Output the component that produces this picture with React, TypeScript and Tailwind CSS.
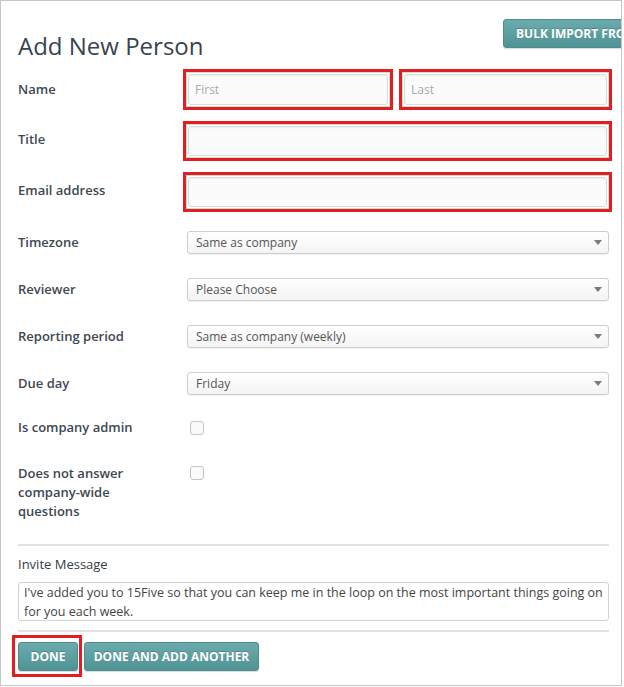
import React from 'react';

const font = { fontFamily: '"Open Sans", "Noto Sans", Arial, sans-serif' };

const Label: React.FC<{ children: React.ReactNode }> = ({ children }) => (
  <div className="w-[165px] shrink-0 text-[13px] font-semibold leading-[19px] text-[#3d4852]">{children}</div>
);

const RedBox: React.FC<{ className?: string; children: React.ReactNode }> = ({ className = '', children }) => (
  <div className={`border-[3px] border-[#e41c23] p-[2px] shadow-[inset_0_0_0_1px_#bfe6c9] ${className}`}>{children}</div>
);

const TextInput: React.FC<{ placeholder?: string; h?: string }> = ({ placeholder = '', h = 'h-[31px]' }) => (
  <div
    className={`${h} w-full rounded-[3px] border border-[#dcdcdc] bg-[#fbfbfb] px-[6px] flex items-center text-[12px] text-[#a9a9a9] shadow-[inset_0_1px_2px_rgba(0,0,0,0.06)]`}
  >
    {placeholder}
  </div>
);

const Select: React.FC<{ value: string }> = ({ value }) => (
  <div className="ml-[4px] mr-[3px] flex h-[23px] flex-1 items-center justify-between rounded-[3px] border border-[#cdcdcd] bg-gradient-to-b from-white to-[#f4f4f4] pl-[8px] pr-[6px] text-[12px] text-[#555] shadow-[0_1px_1px_rgba(0,0,0,0.06)]">
    <span>{value}</span>
    <svg width="8" height="5" viewBox="0 0 8 5">
      <path d="M0 0 L8 0 L4 5 Z" fill="#7a7a7a" />
    </svg>
  </div>
);

const Checkbox = () => (
  <div className="ml-[7px] h-[14px] w-[14px] rounded-[3px] border border-[#c4c4c4] bg-[#fafafa]" />
);

const Button: React.FC<{ children: React.ReactNode; className?: string }> = ({ children, className = '' }) => (
  <div
    className={`flex h-[29px] items-center justify-center rounded-[3px] border border-[#4b8d8f] bg-gradient-to-b from-[#6cabad] to-[#4f9395] text-[12px] font-bold text-white [text-shadow:0_-1px_0_rgba(0,0,0,0.2)] shadow-[0_1px_1px_rgba(0,0,0,0.15)] ${className}`}
  >
    {children}
  </div>
);

export default function App() {
  return (
    <div className="h-[687px] w-[624px] bg-white" style={font}>
      <div className="h-[686px] w-[622px] overflow-hidden border border-[#c6c6c6] pl-[17px] pr-[9px] pt-[18px]">
        {/* Header */}
        <div className="flex items-start justify-between">
          <h1 className="mt-[12px] text-[24px] font-normal leading-[29px] text-[#38444f]">Add New Person</h1>
          <Button className="-mr-[51px] w-[160px] shrink-0 justify-start pl-[12px] whitespace-nowrap">
            BULK IMPORT FROM CSV
          </Button>
        </div>

        {/* Name */}
        <div className="mt-[9px] flex items-center">
          <Label>Name</Label>
          <RedBox className="w-[210px]">
            <TextInput placeholder="First" />
          </RedBox>
          <RedBox className="ml-[6px] flex-1">
            <TextInput placeholder="Last" />
          </RedBox>
        </div>

        {/* Title */}
        <div className="mt-[11px] flex items-center">
          <Label>
            <div className="-mt-[3px]">Title</div>
          </Label>
          <RedBox className="flex-1">
            <TextInput h="h-[30px]" />
          </RedBox>
        </div>

        {/* Email */}
        <div className="mt-[11px] flex items-center">
          <Label>
            <div className="-mt-[3px]">Email address</div>
          </Label>
          <RedBox className="flex-1">
            <TextInput h="h-[30px]" />
          </RedBox>
        </div>

        <div className="mt-[19px] flex items-center">
          <Label>Timezone</Label>
          <Select value="Same as company" />
        </div>
        <div className="mt-[24px] flex items-center">
          <Label>Reviewer</Label>
          <Select value="Please Choose" />
        </div>
        <div className="mt-[24px] flex items-center">
          <Label>Reporting period</Label>
          <Select value="Same as company (weekly)" />
        </div>
        <div className="mt-[24px] flex items-center">
          <Label>Due day</Label>
          <Select value="Friday" />
        </div>

        <div className="mt-[23px] flex items-center">
          <Label>Is company admin</Label>
          <Checkbox />
        </div>
        <div className="mt-[27px] flex items-start">
          <Label>
            Does not answer
            <br />
            company-wide
            <br />
            questions
          </Label>
          <div className="mt-[2px]">
            <Checkbox />
          </div>
        </div>

        <div className="mr-[3px] mt-[23px] h-[2px] bg-[#e3e3e3]" />

        <div className="mt-[9px] text-[13px] leading-[19px] text-[#333d47]">Invite Message</div>
        <div className="mr-[3px] mt-[8px] h-[39px] rounded-[3px] border border-[#d2d2d2] bg-white px-[5px] text-[12.5px] leading-[19px] text-[#444]">
          I've added you to 15Five so that you can keep me in the loop on the most important things going on for you
          each week.
        </div>

        <div className="mr-[3px] mt-[9px] h-[2px] bg-[#e3e3e3]" />

        <div className="mt-[10px] flex gap-[6px]">
          <div className="relative">
            <Button className="w-[60px]">DONE</Button>
            <span className="pointer-events-none absolute -bottom-[6px] -left-[6px] -right-[4px] -top-[7px] border-[3px] border-[#e41c23]" />
          </div>
          <Button className="w-[175px]">DONE AND ADD ANOTHER</Button>
        </div>
      </div>
    </div>
  );
}
